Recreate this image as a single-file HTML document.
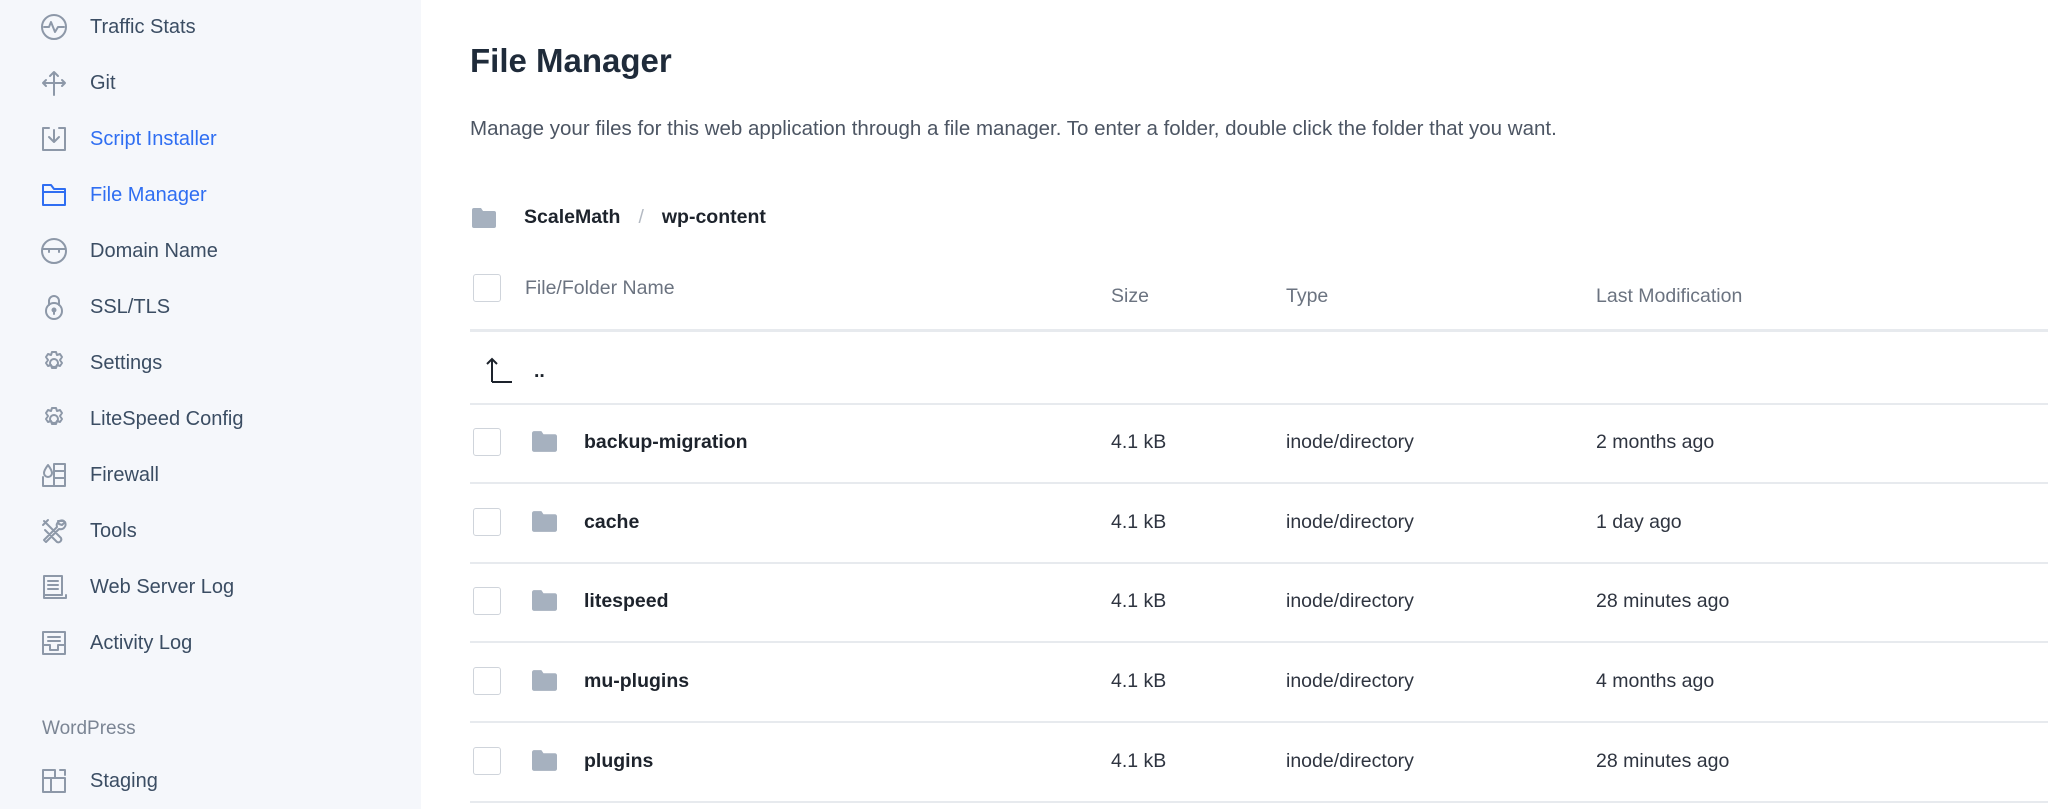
<!DOCTYPE html>
<html><head><meta charset="utf-8"><style>
*{margin:0;padding:0;box-sizing:border-box}
body{width:2048px;height:809px;overflow:hidden;background:#fff;font-family:"Liberation Sans",sans-serif;position:relative}
.side{position:absolute;left:0;top:0;width:421px;height:809px;background:#f5f7fb}
.it{position:absolute;left:40px;height:30px;display:flex;align-items:center;font-size:20px;color:#3b4d63}
.it svg{width:28px;height:28px;margin-right:22px;stroke:#8d98a8;fill:none;stroke-width:2;stroke-linecap:round;stroke-linejoin:round}
.it.act{color:#2f6ef2}.it.act svg{stroke:#2f6ef2}
.wp{position:absolute;left:42px;top:718px;font-size:19px;color:#7b8594}
h1{position:absolute;left:470px;top:42px;font-size:33px;font-weight:bold;color:#1f2b3a;white-space:nowrap}
.desc{position:absolute;left:470px;top:117px;font-size:20.5px;color:#4c5563;white-space:nowrap}
.bc{position:absolute;left:472px;top:206px;display:flex;align-items:center;font-size:19.5px;font-weight:bold;color:#1d232c;white-space:nowrap}
.abs{position:absolute;white-space:nowrap}
.cb{position:absolute;left:473px;width:28px;height:28px;border:1.5px solid #cfd4db;border-radius:3px;background:#fff}
.hd{font-size:19.5px;color:#6b7380}
.line{position:absolute;left:470px;right:0;height:2px;background:#e7eaee}
.nm{font-size:19.5px;font-weight:bold;color:#1d232c}
.cl{font-size:19.5px;color:#2e3440}
.fold{position:absolute;width:25px;height:21px}
</style></head><body>
<div class="side">
<div class="it" style="top:12px"><svg viewBox="0 0 28 28"><circle cx="14" cy="14" r="12"/><path d="M4 14h5l2-5 4 10 3-5h6"/></svg>Traffic Stats</div>
<div class="it" style="top:68px"><svg viewBox="0 0 28 28"><path d="M14 3v23M10 7l4-4 4 4M3 14h22M6 11l-3 3 3 3M22 11l3 3-3 3"/></svg>Git</div>
<div class="it act" style="top:124px;color:#2f6ef2"><svg viewBox="0 0 28 28" style="stroke:#8d98a8"><path d="M9 3H3v22h22V3h-6M14 5v12M9 12l5 5 5-5"/></svg>Script Installer</div>
<div class="it act" style="top:180px"><svg viewBox="0 0 28 28"><path d="M3 4h8l3 4h11v16H3zM3 11h22"/></svg>File Manager</div>
<div class="it" style="top:236px"><svg viewBox="0 0 28 28"><circle cx="14" cy="14" r="12"/><path d="M3 12h22M9 13v2M19 13v2"/></svg>Domain Name</div>
<div class="it" style="top:292px"><svg viewBox="0 0 28 28"><circle cx="14" cy="18" r="8"/><path d="M9 12V8a5 5 0 0 1 10 0v4M14 17v4"/><circle cx="14" cy="17" r="1.5"/></svg>SSL/TLS</div>
<div class="it" style="top:348px"><svg viewBox="0 0 28 28"><circle cx="14" cy="14" r="4"/><path d="M12 3h4l1 3 3-1 2 3-2 3 2 3-2 3-3-1-1 3h-4l-1-3-3 1-2-3 2-3-2-3 2-3 3 1z"/></svg>Settings</div>
<div class="it" style="top:404px"><svg viewBox="0 0 28 28"><circle cx="14" cy="14" r="4"/><path d="M12 3h4l1 3 3-1 2 3-2 3 2 3-2 3-3-1-1 3h-4l-1-3-3 1-2-3 2-3-2-3 2-3 3 1z"/></svg>LiteSpeed Config</div>
<div class="it" style="top:460px"><svg viewBox="0 0 28 28"><path d="M14 3h11v22H3v-9M14 10h11M14 17h11M14 3v22M8 4c-3 4-4 6-4 8a4 4 0 0 0 8 0c0-2-1-4-4-8z"/></svg>Firewall</div>
<div class="it" style="top:516px"><svg viewBox="0 0 28 28"><path d="M4 4l6 6M3 8l5-5M9 9l12 12a3 3 0 0 1-4 4L5 13M24 4a5 5 0 0 0-7 6L4 23l2 2 13-13a5 5 0 0 0 6-7l-3 3-3-1-1-3z"/></svg>Tools</div>
<div class="it" style="top:572px"><svg viewBox="0 0 28 28"><path d="M4 3h18v19H4zM8 8h10M8 12h10M8 16h10M4 22v3h22v-3"/></svg>Web Server Log</div>
<div class="it" style="top:628px"><svg viewBox="0 0 28 28"><path d="M3 3h22v22H3zM8 8h12M8 12h12M3 16h7v5h8v-5h7"/></svg>Activity Log</div>
<div class="wp">WordPress</div>
<div class="it" style="top:766px"><svg viewBox="0 0 28 28"><path d="M3 3h12v8H3zM3 11v14h8M20 3h5v5M25 11v14H11V11z"/></svg>Staging</div>
</div>

<h1>File Manager</h1>
<div class="desc">Manage your files for this web application through a file manager. To enter a folder, double click the folder that you want.</div>
<div class="bc"><svg width="24" height="20" viewBox="0 0 24 20"><path d="M0 2a2 2 0 0 1 2-2h7l2 3h11a2 2 0 0 1 2 2v13a2 2 0 0 1-2 2H2a2 2 0 0 1-2-2z" fill="#a6b1bf"/></svg><span style="margin-left:28px">ScaleMath</span><span style="margin:0 18px;color:#b3b9c2;font-weight:normal">/</span><span>wp-content</span></div>

<div class="cb" style="top:274px"></div>
<div class="abs hd" style="left:525px;top:277px">File/Folder Name</div>
<div class="abs hd" style="left:1111px;top:285px">Size</div>
<div class="abs hd" style="left:1286px;top:285px">Type</div>
<div class="abs hd" style="left:1596px;top:285px">Last Modification</div>
<div class="line" style="top:329px;height:3px"></div>

<svg class="abs" style="left:486px;top:357px" width="28" height="26" viewBox="0 0 28 26"><path d="M6 25V2M1 7l5-5 5 5M6 25h20" fill="none" stroke="#1d232c" stroke-width="2"/></svg>
<div class="abs nm" style="left:534px;top:360px">..</div>
<div class="line" style="top:403px"></div>

<div id="rows"></div>
<script>
var r=[["backup-migration","2 months ago"],["cache","1 day ago"],["litespeed","28 minutes ago"],["mu-plugins","4 months ago"],["plugins","28 minutes ago"]];
var h="";r.forEach(function(x,i){var c=442+i*79.7;
h+='<div class="cb" style="top:'+(c-14)+'px"></div>'+
'<svg class="fold" style="left:532px;top:'+(c-11)+'px" viewBox="0 0 24 20"><path d="M0 2a2 2 0 0 1 2-2h7l2 3h11a2 2 0 0 1 2 2v13a2 2 0 0 1-2 2H2a2 2 0 0 1-2-2z" fill="#a6b1bf"/></svg>'+
'<div class="abs nm" style="left:584px;top:'+(c-11)+'px">'+x[0]+'</div>'+
'<div class="abs cl" style="left:1111px;top:'+(c-11)+'px">4.1 kB</div>'+
'<div class="abs cl" style="left:1286px;top:'+(c-11)+'px">inode/directory</div>'+
'<div class="abs cl" style="left:1596px;top:'+(c-11)+'px">'+x[1]+'</div>'+
'<div class="line" style="top:'+(c+40)+'px"></div>';});
document.getElementById("rows").innerHTML=h;
</script>
</body></html>
